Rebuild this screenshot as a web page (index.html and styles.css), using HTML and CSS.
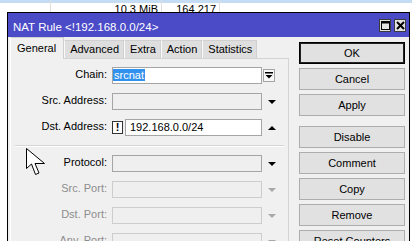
FILE: index.html
```html
<!DOCTYPE html>
<html>
<head>
<meta charset="utf-8">
<link rel="stylesheet" href="styles.css">
</head>
<body>
<div class="bgtable">
  <div class="trow selrow"><div class="c c1"></div><div class="c c2"></div><div class="c c3"></div><div class="c c4"></div></div>
  <div class="trow plain"><div class="c c1"></div><div class="c c2 num">10.3 MiB</div><div class="c c3 num">164 217</div><div class="c c4"></div></div>
</div>
<div class="window">
  <div class="titlebar">
    <span class="title">NAT Rule &lt;!192.168.0.0/24&gt;</span>
    <span class="tbtns">
      <span class="tbtn"><svg width="9" height="9" viewBox="0 0 9 9"><rect x="0.5" y="0.5" width="8" height="8" fill="none" stroke="#000"/><rect x="0.5" y="0.5" width="8" height="2" fill="#000"/></svg></span>
      <span class="tbtn"><svg width="9" height="9" viewBox="0 0 9 9"><path d="M1 1 L8 8 M8 1 L1 8" stroke="#000" stroke-width="2"/></svg></span>
    </span>
  </div>
  <div class="wbody">
    <div class="left">
      <div class="tabs">
        <div class="tab active">General</div>
        <div class="tab">Advanced</div>
        <div class="tab">Extra</div>
        <div class="tab">Action</div>
        <div class="tab">Statistics</div>
      </div>
      <div class="panel">
        <div class="row">
          <div class="lbl">Chain:</div>
          <div class="field chain"><span class="hl">srcnat</span></div>
          <div class="ctrl"><span class="ddbox"><svg width="10" height="11" viewBox="0 0 10 11"><rect x="1" y="2" width="8" height="1.5" fill="#000"/><path d="M1.5 5 L8.5 5 L5 8.5 Z" fill="#000"/></svg></span></div>
        </div>
        <div class="row">
          <div class="lbl">Src. Address:</div>
          <div class="field empty"></div>
          <div class="ctrl"><span class="tri"></span></div>
        </div>
        <div class="row">
          <div class="lbl">Dst. Address:</div>
          <div class="excl">!</div>
          <div class="field dst">192.168.0.0/24</div>
          <div class="ctrl"><span class="tri up"></span></div>
        </div>
        <div class="divider"></div>
        <div class="row">
          <div class="lbl">Protocol:</div>
          <div class="field empty"></div>
          <div class="ctrl"><span class="tri"></span></div>
        </div>
        <div class="row">
          <div class="lbl dis">Src. Port:</div>
          <div class="field empty dim"></div>
          <div class="ctrl"><span class="tri dimtri"></span></div>
        </div>
        <div class="row">
          <div class="lbl dis">Dst. Port:</div>
          <div class="field empty dim"></div>
          <div class="ctrl"><span class="tri dimtri"></span></div>
        </div>
        <div class="row">
          <div class="lbl dis">Any. Port:</div>
          <div class="field empty dim"></div>
          <div class="ctrl"><span class="tri dimtri"></span></div>
        </div>
      </div>
    </div>
    <div class="buttons">
      <div class="btn def">OK</div>
      <div class="btn">Cancel</div>
      <div class="btn">Apply</div>
      <div class="btn gap">Disable</div>
      <div class="btn">Comment</div>
      <div class="btn">Copy</div>
      <div class="btn">Remove</div>
      <div class="btn">Reset Counters</div>
    </div>
  </div>
  <svg class="cursor" width="21" height="29" viewBox="0 0 21 29"><path d="M0.5 0.5 L0.5 20.5 L5.5 16 L9.5 26.5 L13 25 L9 15.5 L18.5 15.5 Z" fill="#fff" stroke="#000" stroke-width="1" stroke-linejoin="miter"/></svg>
</div>
</body>
</html>
```

FILE: styles.css
```css
* { box-sizing: border-box; }
body {
  margin: 0;
  width: 412px;
  height: 241px;
  overflow: hidden;
  background: #fff;
  font-family: "Liberation Sans", Arial, sans-serif;
  font-size: 11px;
  color: #000;
}
.bgtable { height: 12px; }
.trow { display: flex; }
.selrow { height: 3px; background: #c4dcf4; }
.plain { height: 9px; overflow: hidden; }
.c { border-right: 1px solid #dedede; }
.c1 { width: 51px; }
.c2 { width: 111px; }
.c3 { width: 58px; }
.c4 { flex: 1; border-right: none; }
.num { text-align: right; padding-right: 3px; line-height: 13px; }

.window {
  position: relative;
  margin-left: 7px;
  width: 403px;
  height: 229px;
  border: 1px solid #000;
  border-bottom: none;
  background: #f0f0f0;
  overflow: hidden;
}
.titlebar {
  height: 24px;
  background: #4b4bc8;
  color: #fff;
  display: flex;
  justify-content: space-between;
  padding: 0 3px 0 5px;
}
.title { padding-top: 4px; line-height: 20px; font-size: 11.5px; }
.tbtns { display: flex; gap: 3px; padding-top: 6px; }
.tbtn {
  width: 12px;
  height: 13px;
  border: 1px solid #3a3a3a;
  background: #e2e2e2;
  display: flex;
  align-items: center;
  justify-content: center;
}
.wbody { display: flex; padding-left: 2px; }
.left { width: 279px; }
.tabs { display: flex; align-items: flex-end; height: 21px; }
.tab {
  height: 18px;
  padding: 0 4px 0 5px;
  line-height: 16px;
  background: #dedede;
  border: 1px solid #d0d0d0;
  border-bottom: none;
  border-left-color: #fafafa;
}
.tab.active {
  height: 22px;
  margin-bottom: -1px;
  padding: 0 7px 0 6px;
  line-height: 21px;
  background: #f0f0f0;
  border-color: #cfcfcf;
  border-left-color: #ffffff;
  position: relative;
  z-index: 1;
}
.panel {
  height: 200px;
  border: 1px solid #d4d4d4;
  border-left-color: #ffffff;
  border-bottom: none;
  padding-top: 8px;
}
.row { display: flex; height: 17px; margin-bottom: 9px; }
.lbl { width: 96px; margin-right: 5px; text-align: right; line-height: 15px; white-space: nowrap; }
.lbl.dis { color: #8d8d8d; }
.field {
  width: 150px;
  height: 17px;
  border: 1px solid #a5a5a5;
  background: #fff;
  line-height: 15px;
  padding: 0 4px;
  white-space: nowrap;
  overflow: hidden;
}
.field.chain { padding-left: 0; }
.field.empty { background: #efefef; }
.field.dim { border-color: #cdcdcd; }
.field.dst { width: 137px; }
.hl { background: #3391ee; color: #fff; padding: 0 1px; }
.excl {
  align-self: center;
  width: 11px;
  height: 13px;
  margin-right: 2px;
  border: 1px solid #333;
  background: #fff;
  font-weight: bold;
  text-align: center;
  line-height: 11px;
}
.ctrl { width: 14px; margin-left: 1px; display: flex; align-items: center; }
.ddbox {
  width: 12px;
  height: 13px;
  border: 1px solid #a5a5a5;
  background: #f7f7f7;
  display: flex;
  align-items: center;
  justify-content: center;
}
.tri {
  margin-left: 5px;
  width: 0;
  height: 0;
  border-left: 4px solid transparent;
  border-right: 4px solid transparent;
  border-top: 4px solid #000;
}
.tri.up { border-top: none; border-bottom: 4px solid #000; }
.tri.dimtri { border-top-color: #a8a8a8; }
.divider {
  height: 2px;
  margin: 2px 4px 8px 4px;
  border-top: 1px solid #d6d6d6;
  border-bottom: 1px solid #fff;
}
.buttons {
  margin-left: 10px;
  width: 106px;
  padding-top: 5px;
  display: flex;
  flex-direction: column;
  gap: 4px;
}
.btn {
  height: 22px;
  flex: none;
  border: 1px solid #adadad;
  background: #e1e1e1;
  text-align: center;
  line-height: 20px;
}
.btn.def { border-color: #000; box-shadow: inset 0 0 0 1px #222; }
.btn.gap { margin-top: 6px; }
.cursor { position: absolute; left: 18px; top: 135px; }
```
